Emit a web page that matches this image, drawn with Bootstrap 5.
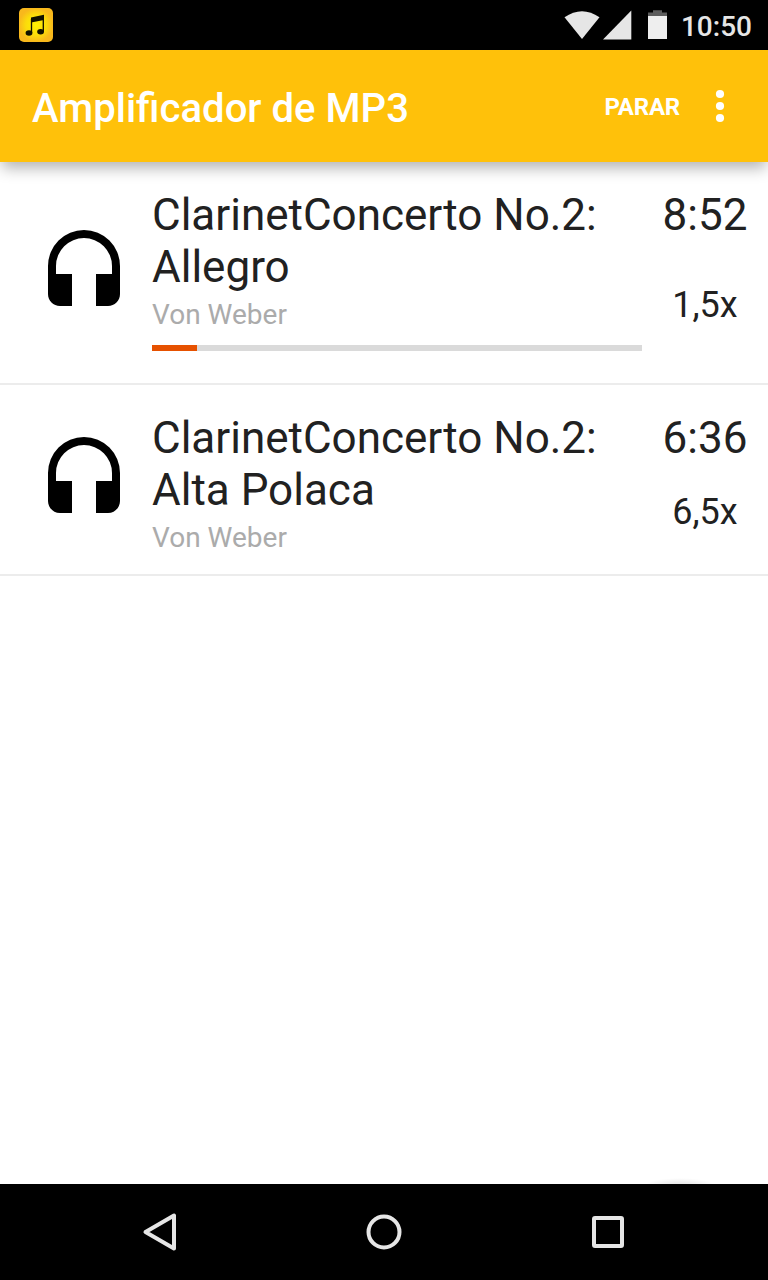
<!DOCTYPE html>
<html lang="pt">
<head>
<meta charset="utf-8">
<meta name="viewport" content="width=device-width, initial-scale=1">
<title>Amplificador de MP3</title>
<link href="https://cdn.jsdelivr.net/npm/bootstrap@5.3.0/dist/css/bootstrap.min.css" rel="stylesheet">
<style>
  body { font-family: Roboto, sans-serif; color: #212121; background: #fff; }
  .status-bar { height: 50px; background: #000; padding: 0 16px 0 19px; }
  .clock { font-size: 28px; font-weight: 500; line-height: 33px; color: #e6e6e6; margin: 2px 0 0 13px; }
  .app-bar { height: 112px; background: #ffc10a; padding: 0 36px 0 32px; z-index: 2; box-shadow: 0 8px 14px -2px rgba(0,0,0,.3); }
  .app-title { font-size: 40.1px; font-weight: 500; line-height: 48px; margin-top: 5px; }
  .stop-btn { font-size: 24px; font-weight: 700; line-height: 28px; margin: 2px 28px 0 0; letter-spacing: -.2px; }
  .song { border-bottom: 2px solid #ececec; height: 191px; padding-left: 36px; }
  .song.playing { height: 223px; }
  .song-icon { width: 96px; margin-top: 3px; }
  .song-body { width: 490px; margin-left: 20px; padding-top: 27px; }
  .song-title { font-size: 44px; line-height: 52px; }
  .song-artist { font-size: 28px; line-height: 33px; margin-top: 5px; color: #ababab; }
  .song-progress { height: 6px; background: #dadada; margin-top: 14px; }
  .song-progress .progress-bar { background: #e65100; }
  .song-side { width: 126px; padding-top: 27px; }
  .song-time { font-size: 44px; line-height: 52px; }
  .song-gain { font-size: 36px; line-height: 42px; margin-top: 27px; }
  .playing .song-gain { margin-top: 43px; }
  .fab-shadow { width: 72px; height: 16px; right: 52px; bottom: -10px; background: radial-gradient(closest-side, rgba(0,0,0,.12), transparent); }
  .nav-keys { height: 96px; background: #000; padding: 0 112px; z-index: 2; }
  .nav-keys svg { width: 96px; height: 96px; }
</style>
</head>
<body class="vh-100 d-flex flex-column overflow-hidden">
  <div class="status-bar d-flex align-items-center flex-shrink-0">
    <svg width="34" height="34" viewBox="0 0 34 34" class="me-auto">
      <defs><radialGradient id="glow"><stop offset="0" stop-color="#fff200"/><stop offset=".6" stop-color="#fbdc0b"/><stop offset="1" stop-color="#f8b81c"/></radialGradient></defs>
      <rect width="34" height="34" rx="5" fill="url(#glow)"/>
      <path d="M12 9.500 25 6.800V12L12 14.500Z" fill="#101000"/>
      <path d="M12.500 11v14M24.300 9v15" stroke="#101000" stroke-width="1.300"/>
      <ellipse cx="10" cy="25" rx="3.400" ry="2.700" fill="#101000"/><ellipse cx="21.600" cy="23.800" rx="3.400" ry="2.700" fill="#101000"/>
    </svg>
    <svg width="104" height="32" viewBox="564 9 104 32">
      <path d="M564.500 17.300Q582 5 599.500 17.300L582 39Z" fill="#e6e6e6"/>
      <path d="M631.300 10.500V39.500H603Z" fill="#e6e6e6"/>
      <path d="M648 16V12.500H653V10.300H662V12.500H667V16Z" fill="#5c5c5c"/>
      <path d="M648 16H667V39H648Z" fill="#eee"/>
    </svg>
    <span class="clock">10:50</span>
  </div>

  <header class="app-bar d-flex align-items-center flex-shrink-0 position-relative text-white">
    <h1 class="app-title mb-0 me-auto">Amplificador de MP3</h1>
    <button type="button" class="stop-btn btn p-0 border-0 text-white">PARAR</button>
    <svg width="24" height="34" viewBox="0 0 24 34" fill="#fff"><circle cx="12" cy="5" r="4.100"/><circle cx="12" cy="17" r="4.100"/><circle cx="12" cy="29" r="4.100"/></svg>
  </header>

  <main class="flex-grow-1 position-relative">
    <div class="song playing d-flex">
      <div class="song-icon d-flex align-items-center"><svg width="96" height="96" viewBox="0 0 24 24"><path d="M12 1a9 9 0 0 0-9 9v7c0 1.660 1.340 3 3 3h3v-8H5v-2a7 7 0 0 1 14 0v2h-4v8h3c1.660 0 3-1.340 3-3v-7a9 9 0 0 0-9-9z"/></svg></div>
      <div class="song-body">
        <div class="song-title">ClarinetConcerto No.2: Allegro</div>
        <div class="song-artist">Von Weber</div>
        <div class="song-progress progress rounded-0"><div class="progress-bar" style="width: 9.184%"></div></div>
      </div>
      <div class="song-side text-center">
        <div class="song-time">8:52</div>
        <div class="song-gain">1,5x</div>
      </div>
    </div>
    <div class="song d-flex">
      <div class="song-icon d-flex align-items-center"><svg width="96" height="96" viewBox="0 0 24 24"><path d="M12 1a9 9 0 0 0-9 9v7c0 1.660 1.340 3 3 3h3v-8H5v-2a7 7 0 0 1 14 0v2h-4v8h3c1.660 0 3-1.340 3-3v-7a9 9 0 0 0-9-9z"/></svg></div>
      <div class="song-body">
        <div class="song-title">ClarinetConcerto No.2: Alta Polaca</div>
        <div class="song-artist">Von Weber</div>
      </div>
      <div class="song-side text-center">
        <div class="song-time">6:36</div>
        <div class="song-gain">6,5x</div>
      </div>
    </div>
    <div class="fab-shadow position-absolute"></div>
  </main>

  <nav class="nav-keys d-flex flex-shrink-0 justify-content-between position-relative">
    <svg viewBox="0 0 96 96" fill="none" stroke="#e6e6e6" stroke-width="4" stroke-linejoin="round"><path d="M62 31.500V64.500L33.500 48Z"/></svg>
    <svg viewBox="0 0 96 96" fill="none" stroke="#e6e6e6" stroke-width="4"><circle cx="48" cy="48" r="15.500"/></svg>
    <svg viewBox="0 0 96 96" fill="none" stroke="#e6e6e6" stroke-width="4"><rect x="34" y="34" width="28" height="28" rx="1"/></svg>
  </nav>
<script src="https://cdn.jsdelivr.net/npm/bootstrap@5.3.0/dist/js/bootstrap.bundle.min.js"></script>
</body>
</html>
